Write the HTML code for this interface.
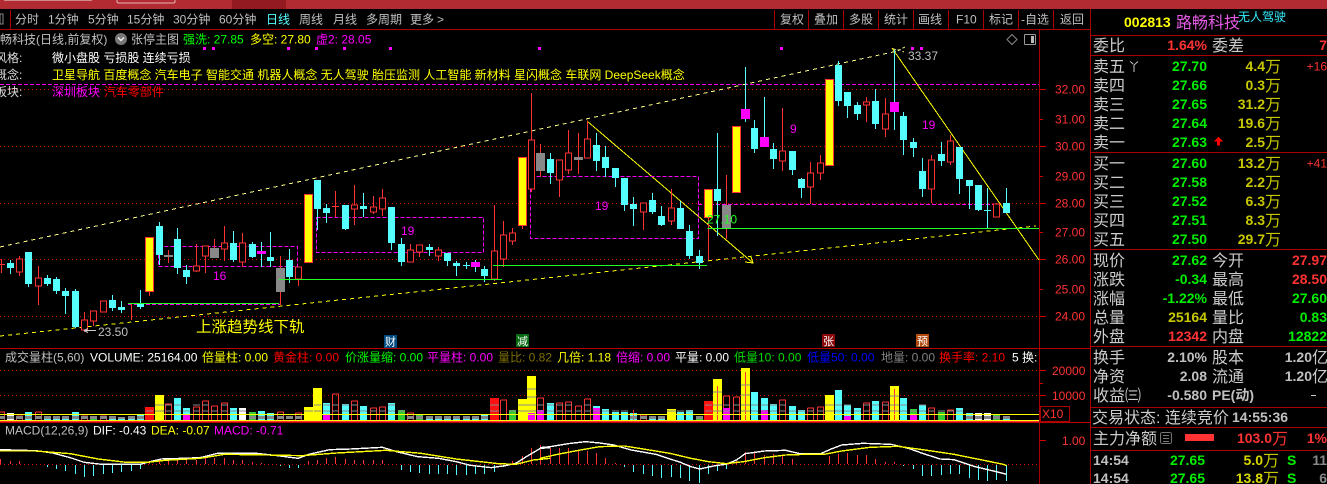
<!DOCTYPE html>
<html><head><meta charset="utf-8"><title>路畅科技</title>
<style>
html,body{margin:0;padding:0;background:#000;width:1327px;height:484px;overflow:hidden}
svg{display:block;font-family:"Liberation Sans","WenQuanYi Zen Hei","Noto Sans CJK SC",sans-serif}
.c{shape-rendering:crispEdges}
.b{font-weight:bold;font-size:14px}
</style></head><body>
<svg width="1327" height="484" viewBox="0 0 1327 484" xmlns="http://www.w3.org/2000/svg">
<rect width="1327" height="484" fill="#000"/>
<g class="c">
<rect width="1327" height="9" fill="#b22b33"/>
<rect x="232" width="54" height="9" fill="#931a20"/>
<path d="M117 0v1q0 2 2 2h54q2 0 2-2V0" fill="none" stroke="#e8b0b0"/>
<path d="M4 0h88v1H4z" fill="#e8c8c8" opacity=".6"/>
<path d="M10.500 10V29 M774.500 10V29M808.500 10V29M843.500 10V29M878.500 10V29M913.500 10V29M948.500 10V29M983.500 10V29M1018.500 10V29M1053.500 10V29M1090.500 9V484M1039.500 30V484" stroke="#a00" fill="none"/>
<path d="M0 29.500H1090M1091 35.500H1327M1091 55.500H1327M1091 152.500H1327M1091 249.500H1327M1091 346.500H1327M1091 407.500H1327M1091 427.500H1327M1091 450.500H1327" stroke="#a00"/>
<path d="M0 348.500H1091M0 422.500H1091" stroke="#b00"/>
<path d="M0 89.500H1039M0 146.500H1039M0 203.500H1039M0 259.500H1039M0 316.500H1039M0 370.500H1039M0 395.500H1039M0 464.500H1039" stroke="#c00" stroke-dasharray="1 3"/>
<path d="M1040 89.500h6M1040 119.500h3M1040 146.500h6M1040 176.500h3M1040 203.500h6M1040 232.500h3M1040 259.500h6M1040 289.500h3M1040 316.500h6M1040 370.500h6M1040 383.500h3M1040 395.500h6M1040 440.500h6" stroke="#c00"/>
</g>
<!-- toolbar -->
<g font-size="12" fill="#c0c0c0">
<text x="15" y="23.500">分时</text><text x="48" y="23.500">1分钟</text><text x="88" y="23.500">5分钟</text><text x="127" y="23.500">15分钟</text><text x="173" y="23.500">30分钟</text><text x="219" y="23.500">60分钟</text><text x="266" y="23.500" fill="#5ff">日线</text><text x="299" y="23.500">周线</text><text x="333" y="23.500">月线</text><text x="366" y="23.500">多周期</text><text x="410" y="23.500">更多</text><text x="437" y="23.500">&gt;</text>
<text x="780" y="23.500">复权</text><text x="814" y="23.500">叠加</text><text x="849" y="23.500">多股</text><text x="884" y="23.500">统计</text><text x="918" y="23.500">画线</text><text x="956" y="23.500">F10</text><text x="989" y="23.500">标记</text><text x="1021" y="23.500">-自选</text><text x="1060" y="23.500">返回</text>
<rect x="0" y="14" width="3" height="10" fill="none" stroke="#888"/>
</g>
<!-- title row -->
<g font-size="12">
<text x="0" y="43.500" fill="#c0c0c0">畅科技(日线,前复权)</text>
<circle cx="121" cy="39" r="6" fill="#777"/><path d="M118 37.500l3 3 3-3" fill="none" stroke="#eee" stroke-width="1.500"/>
<text x="131" y="43.500" fill="#c0c0c0">张停主图</text>
<text x="183" y="43.500" fill="#0f0">强洗: 27.85</text>
<text x="250" y="43.500" fill="#ff0">多空: 27.80</text>
<text x="316" y="43.500" fill="#f0f">虚2: 28.05</text>
<text x="-5" y="62" fill="#ddd">风格:</text><text x="52" y="62" fill="#fff">微小盘股 亏损股 连续亏损</text>
<text x="-5" y="79" fill="#ddd">概念:</text><text x="52" y="79" fill="#ff0">卫星导航 百度概念 汽车电子 智能交通 机器人概念 无人驾驶 胎压监测 人工智能 新材料 星闪概念 车联网 DeepSeek概念</text>
<text x="-5" y="96" fill="#ddd">板块:</text><text x="52" y="96" fill="#f0f">深圳板块</text><text x="104" y="96" fill="#f00">汽车零部件</text>
</g>
<g class="c" fill="#f0f"><path d="M203 47h3v3h-3zM212 47h3v3h-3zM287 47h3v3h-3zM315 47h3v3h-3zM343 47h3v3h-3zM389 47h3v3h-3zM538 47h3v3h-3zM780 47h3v3h-3zM911 47h3v3h-3zM920 47h3v3h-3z"/></g>
<path d="M1012 34.500l5 5-5 5-5-5z" fill="none" stroke="#888"/>
<g class="c"><rect x="1024.500" y="34.500" width="11" height="10" rx="1" fill="none" stroke="#999"/><rect x="1031" y="36" width="3" height="7" fill="#bbb"/></g>
<!-- lines -->
<g class="c" fill="none">
<path d="M0 84.500H1039" stroke="#f0f" stroke-dasharray="4 2"/>
<path d="M0 247L893 52" stroke="#ff8" stroke-dasharray="4 4"/>
<path d="M0 336L1036 226" stroke="#ff0" stroke-dasharray="4 4"/>
<path d="M587 121L753 263M892 48L1039 260" stroke="#ff0"/>
<path d="M745 262l8 1-2-6" stroke="#ff0"/>
<path d="M905 47l-6 3 -6-1M893 52l7-2 4 2" stroke="#ff8" stroke-dasharray="3 2"/>
<path d="M158.500 246.500H297.500V266.500H158.500ZM316.500 217.500H483.500V252.500H316.500ZM530.500 176.500H698.500V238.500H530.500ZM128 304.500H280M698 204.500H994" stroke="#f0f" stroke-dasharray="4 2"/>
</g>
<!-- candles -->
<g class="c" fill="none">
<path stroke="#5ff" d="M10.500 260V274M28.500 252V287M47.500 275V286M56.500 277V294M65.500 288V314M75.500 289V328M112.500 295V311M121.500 301V313M140.500 290V309M159.500 222V265M177.500 228V274M186.500 265V284M233.500 231V262M252.500 242V258M270.500 232V267M289.500 249V283M317.500 180V230M326.500 204V223M345.500 205V230M363.500 193V217M391.500 207V250M401.500 238V266M429.500 244V256M447.500 253V266M456.500 261V276M466.500 262V269M484.500 266V282M550.500 153V184M596.500 133V171M605.500 146V177M615.500 168V187M624.500 178V211M633.500 197V226M652.500 193V214M661.500 206V226M680.500 201V229M689.500 225V259M699.500 250V269M717.500 133V236M754.500 120V153M773.500 143V169M792.500 151V175M801.500 178V198M838.500 61V106M847.500 92V118M857.500 102V120M875.500 89V129M903.500 112V155M913.500 138V157M922.500 158V197M941.500 142V166M959.500 147V194M969.500 180V209M978.500 185V211M1006.500 188V213M987.500 188V229M261.500 242V267M475.500 260V272M745.500 67V122M764.500 97V147M894.500 50V130M984 210.500h7M463 265.500h7"/>
<path stroke="#5ff" stroke-width="7" d="M10.500 263V268M28.500 252V284M47.500 278V284M56.500 279V291M65.500 291V296M75.500 291V327M112.500 300V308M121.500 307V310M140.500 304V307M159.500 226V255M177.500 239V268M186.500 270V277M233.500 243V260M252.500 244V257M270.500 257V261M289.500 260V277M317.500 180V209M326.500 208V213M345.500 205V229M363.500 206V209M391.500 207V243M401.500 244V262M429.500 247V250M447.500 253V261M456.500 263V266M484.500 269V276M550.500 159V173M596.500 145V161M605.500 157V168M615.500 168V178M624.500 178V205M633.500 204V209M652.500 200V212M661.500 216V225M680.500 208V229M689.500 231V256M699.500 256V263M717.500 189V201M754.500 128V149M773.500 149V159M792.500 151V170M801.500 179V188M838.500 65V101M847.500 92V106M857.500 105V114M875.500 101V124M903.500 116V140M913.500 142V148M922.500 171V189M941.500 154V161M959.500 147V179M969.500 180V186M978.500 185V210M1006.500 203V213"/>
<path stroke="#f33" d="M19.500 256V276M38.500 266V305M84.500 312V332M93.500 311V326M103.500 301V312M196.500 244V272M205.500 246V273M224.500 226V261M242.500 233V267M298.500 267V286M354.500 185V225M373.500 196V214M382.500 189V216M410.500 244V262M419.500 245V257M438.500 247V261M494.500 205V281M503.500 221V267M512.500 228V245M531.500 93V192M559.500 160V197M568.500 130V174M587.500 121V158M643.500 203V230M671.500 189V225M782.500 108V171M810.500 162V204M820.500 155V180M885.500 98V137M931.500 155V203M950.500 135V165M996.500 203V217M866.500 97V122M1.500 259V273M335.500 191V217M131.500 303V320M168.500 250V263M214.500 239V258M280.500 256V305M540.500 144V177M578.500 133V174M726.500 175V239M708.500 218V260M149.500 292V296M522.500 226V229M128 303.500H138M0 264.500h5M332 206.500h7"/>
<path stroke="#f33" fill="#000" d="M16.500 259h6v13h-6zM35.500 278h6v8h-6zM81.500 320h6v10h-6zM90.500 311h6v10h-6zM100.500 301h6v11h-6zM193.500 266h6v5h-6zM202.500 246h6v10h-6zM221.500 243h6v6h-6zM239.500 243h6v19h-6zM295.500 267h6v12h-6zM351.500 205h6v4h-6zM370.500 207h6v5h-6zM379.500 198h6v11h-6zM407.500 250h6v12h-6zM416.500 245h6v7h-6zM435.500 250h6v6h-6zM491.500 251h6v28h-6zM500.500 235h6v24h-6zM509.500 233h6v8h-6zM528.500 140h6v49h-6zM556.500 160h6v20h-6zM565.500 153h6v17h-6zM584.500 139h6v19h-6zM640.500 203h6v9h-6zM668.500 208h6v13h-6zM779.500 151h6v10h-6zM807.500 173h6v14h-6zM817.500 163h6v10h-6zM882.500 114h6v15h-6zM928.500 160h6v29h-6zM947.500 141h6v21h-6zM993.500 204h6v13h-6zM863.500 102h6v3h-6z"/>
<path fill="#888" d="M210 248h9v10h-9zM276 268h9v24h-9zM536 153h9v18h-9zM722 205h9v23h-9zM574 157h9v3h-9zM164 255h9v2h-9z"/>
<path fill="#f0f" d="M471 262h9v5h-9zM741 109h9v10h-9zM760 137h9v10h-9zM890 102h9v10h-9zM257 251h9v3h-9z"/>
<path fill="#ff0" stroke="#f33" d="M145.500 237.500h8v54h-8zM304.500 194.500h8v68h-8zM518.500 157.500h8v68h-8zM704.500 189.500h8v28h-8zM732.500 126.500h8v66h-8zM825.500 79.500h8v86h-8z"/>
</g>
<!-- solid green -->
<g class="c" fill="none" stroke="#2f2">
<path d="M128 303.500H279M279 279.500H502M493 265.500H707M707.500 228.500H1039"/>
</g>
<!-- labels -->
<g font-size="12" fill="#c0c0c0">
<text x="98" y="336">23.50</text><text x="908" y="60">33.37</text>
<path d="M84 330.500h12M84 330.500l4-2M84 330.500l4 2" stroke="#ccc" fill="none"/>
<text x="707" y="223.500" fill="#2f2">27.10</text>
</g>
<g font-size="12" fill="#f0f"><text x="213" y="280">16</text><text x="401" y="235">19</text><text x="595" y="210">19</text><text x="790" y="133">9</text><text x="922" y="129">19</text></g>
<text x="196" y="332" font-size="15.500" fill="#ff0">上涨趋势线下轨</text>
<g class="c"><rect x="384" y="335" width="13" height="13" fill="#014a80"/><rect x="516" y="334" width="13" height="13" fill="#086a10"/><rect x="822" y="334" width="13" height="13" fill="#8a0a0a"/><rect x="916" y="334" width="13" height="13" fill="#b04a10"/></g>
<g font-size="11" fill="#fff"><text x="385" y="345.500">财</text><text x="517" y="345">减</text><text x="823" y="345">张</text><text x="917" y="345">预</text></g>
<!-- axis -->
<g font-size="12" fill="#f33">
<text x="1055" y="93.500">32.00</text><text x="1055" y="123.500">31.00</text><text x="1055" y="150.500">30.00</text><text x="1055" y="180.500">29.00</text><text x="1055" y="207.500">28.00</text><text x="1055" y="236.500">27.00</text><text x="1055" y="263.500">26.00</text><text x="1055" y="293.500">25.00</text><text x="1055" y="320.500">24.00</text>
<text x="1052" y="375">20000</text><text x="1052" y="400">10000</text><text x="1062" y="445">1.00</text>
<text x="1042" y="418">X10</text>
</g>
<rect class="c" x="1040.500" y="406.500" width="29" height="15" fill="none" stroke="#a00"/>
<!-- volume header -->
<g font-size="12">
<text x="5" y="361.500" fill="#c0c0c0">成交量柱(5,60)</text><text x="90" y="361.500" fill="#fff">VOLUME: 25164.00</text><text x="202" y="361.500" fill="#ff0">倍量柱: 0.00</text><text x="273" y="361.500" fill="#f00">黄金柱: 0.00</text><text x="345" y="361.500" fill="#0f0">价涨量缩: 0.00</text><text x="427" y="361.500" fill="#f0f">平量柱: 0.00</text><text x="498" y="361.500" fill="#807000">量比: 0.82</text><text x="557" y="361.500" fill="#ff0">几倍: 1.18</text><text x="616" y="361.500" fill="#f0f">倍缩: 0.00</text><text x="675" y="361.500" fill="#fff">平量: 0.00</text><text x="734" y="361.500" fill="#0d0">低量10: 0.00</text><text x="807" y="361.500" fill="#00f">低量50: 0.00</text><text x="881" y="361.500" fill="#808080">地量: 0.00</text><text x="939" y="361.500" fill="#f00">换手率: 2.10</text><text x="1012" y="361.500" fill="#fff">5 换:</text>
<text x="5" y="434.500" fill="#c0c0c0">MACD(12,26,9)</text><text x="93" y="434.500" fill="#fff">DIF: -0.43</text><text x="151" y="434.500" fill="#ff0">DEA: -0.07</text><text x="214" y="434.500" fill="#f0f">MACD: -0.71</text>
</g>
<!-- volume bars -->
<g class="c" fill="none">
<path stroke="#5ff" stroke-width="7" d="M28.500 412V421M47.500 416V421M56.500 416V421M65.500 416V421M75.500 412V421M112.500 416V421M121.500 417V421M131.500 416V421M140.500 415V421M177.500 398V421M186.500 408V421M233.500 408V421M261.500 411V421M270.500 413V421M326.500 403V421M345.500 404V421M363.500 406V421M391.500 403V421M429.500 416V421M438.500 416V421M447.500 416V421M456.500 416V421M466.500 416V421M475.500 416V421M484.500 415V421M550.500 403V421M596.500 406V421M605.500 409V421M615.500 412V421M624.500 412V421M633.500 413V421M652.500 416V421M661.500 416V421M680.500 412V421M689.500 410V421M754.500 392V421M764.500 398V421M773.500 404V421M792.500 406V421M801.500 410V421M838.500 390V421M847.500 405V421M857.500 408V421M875.500 401V421M903.500 398V421M922.500 405V421M959.500 408V421M969.500 413V421M1006.500 416V421"/>
<path stroke="#fff" stroke-width="7" d="M10.500 413V421M242.500 408V421M978.500 413V421M987.500 413V421"/>
<path stroke="#3c3" stroke-width="7" d="M93.500 416V421M252.500 412V421M401.500 410V421M419.500 415V421M512.500 410V421M699.500 416V421M913.500 409V421M941.500 412V421M996.500 415V421"/>
<path stroke="#f33" d="M-1.500 412H4.500V421M16.500 416h6V421M16.500 416V421M35.500 412h6V421M35.500 412V421M81.500 416h6V421M81.500 416V421M100.500 416h6V421M100.500 416V421M165.500 404h6V421M165.500 404V421M193.500 407h6V421M193.500 407V421M202.500 401h6V421M202.500 401V421M211.500 406h6V421M211.500 406V421M221.500 403h6V421M221.500 403V421M277.500 412h6V421M277.500 412V421M295.500 413h6V421M295.500 413V421M332.500 394h6V421M332.500 394V421M351.500 401h6V421M351.500 401V421M370.500 408h6V421M370.500 408V421M379.500 407h6V421M379.500 407V421M407.500 413h6V421M407.500 413V421M500.500 400h6V421M500.500 400V421M537.500 398h6V421M537.500 398V421M556.500 403h6V421M556.500 403V421M565.500 402h6V421M565.500 402V421M575.500 406h6V421M575.500 406V421M584.500 399h6V421M584.500 399V421M640.500 415h6V421M640.500 415V421M723.500 396h6V421M723.500 396V421M733.500 397h6V421M733.500 397V421M779.500 400h6V421M779.500 400V421M807.500 408h6V421M807.500 408V421M817.500 407h6V421M817.500 407V421M863.500 403h6V421M863.500 403V421M882.500 402h6V421M882.500 402V421M928.500 408h6V421M928.500 408V421M947.500 410h6V421M947.500 410V421"/>
<path stroke="#ff0" stroke-width="9" d="M159.500 395V421M308.500 407V421M317.500 388V421M522.500 399V421M531.500 376V421M671.500 409V421M717.500 379V421M745.500 368V421M829.500 395V421M894.500 386V421"/>
<path stroke="#f11" stroke-width="9" d="M149.500 407V421M494.500 398V421M708.500 401V421"/>
<path stroke="#f33" d="M745.500 372V421M717.500 386V420M894.500 389V420M633.500 410V420"/>
<path stroke="#f0f" stroke-width="7" d="M186.500 415V421M326.500 414V421M531.500 413V421M540.500 410V421M596.500 408V421M726.500 408V421M764.500 410V421M847.500 416V421M913.500 415V421"/>
<path stroke="#888" stroke-width="7" d="M1.500 416V419M10.500 416V419M19.500 416V419M28.500 416V419M38.500 416V419M47.500 416V419M56.500 416V419M65.500 416V419M75.500 416V419M84.500 416V419M93.500 416V419M103.500 416V419M112.500 416V419M121.500 417V419M131.500 416V419M140.500 416V419M252.500 416V419M261.500 416V419M270.500 416V419M280.500 416V419M289.500 416V419M298.500 416V419M410.500 416V419M419.500 416V419M429.500 416V419M438.500 416V419M447.500 416V419M456.500 416V419M466.500 416V419M475.500 416V419M484.500 416V419M633.500 416V419M643.500 416V419M652.500 416V419M661.500 416V419M699.500 416V419M969.500 416V419M978.500 416V419M987.500 416V419M996.500 416V419M1006.500 416V419"/>
<path stroke="#888" d="M155 405h9M165 405h7M174 405h7M193 405h7M202 405h7M221 405h7M332 405h7M351 405h7M314 405h7M323 405h7M342 405h7M388 405h7M518 405h9M527 405h9M537 405h7M547 405h7M556 405h7M565 405h7M584 405h7M713 405h9M705 405h7M723 405h7M733 405h7M741 405h9M751 405h7M761 405h7M770 405h7M779 405h7M825 405h9M835 405h7M844 405h7M863 405h7M872 405h7M882 405h7M890 405h9M900 405h7M919 405h7M490 405h9M741 385h9M741 395h9M527 389h9M527 397h9M713 392h9M890 396h9M155 411h9M165 411h7M174 411h7M193 411h7M202 411h7M221 411h7M332 411h7M351 411h7M314 411h7M323 411h7M342 411h7M388 411h7M518 411h9M527 411h9M537 411h7M547 411h7M556 411h7M565 411h7M584 411h7M713 411h9M705 411h7M723 411h7M733 411h7M741 411h9M751 411h7M761 411h7M770 411h7M779 411h7M825 411h9M835 411h7M844 411h7M863 411h7M872 411h7M882 411h7M890 411h9M900 411h7M919 411h7M490 411h9M146 411h7M183 411h7M211 411h7M230 411h7M239 411h7M304 411h9M360 411h7M370 411h7M379 411h7M398 411h7M509 411h7M575 411h7M593 411h7M602 411h7M612 411h7M621 411h7M667 411h9M677 411h7M686 411h7M789 411h7M798 411h7M807 411h7M817 411h7M854 411h7M910 411h7M928 411h7M938 411h7M947 411h7M956 411h7"/>
<path stroke="#ff0" d="M0 414.500H1039"/>
<path stroke="#f33" d="M0 421.500H1039"/>
<path stroke="#ff0" d="M0 420.500H1039"/>
</g>
<!-- MACD bars -->
<g class="c" fill="none">
<path stroke="#f33" d="M0.500 459V464M10.500 461V464M19.500 461V464M149.500 462V464M159.500 459V464M168.500 458V464M177.500 458V464M186.500 460V464M196.500 460V464M205.500 458V464M214.500 458V464M224.500 458V464M233.500 460V464M242.500 460V464M252.500 462V464M261.500 463V464M308.500 461V464M317.500 460V464M326.500 458V464M335.500 457V464M345.500 459V464M354.500 460V464M363.500 460V464M373.500 460V464M382.500 460V464M512.500 461V464M522.500 456V464M531.500 448V464M540.500 445V464M550.500 448V464M559.500 448V464M568.500 448V464M578.500 450V464M587.500 451V464M596.500 453V464M605.500 458V464M615.500 463V464M736.500 461V464M745.500 452V464M754.500 452V464M764.500 455V464M773.500 454V464M782.500 456V464M792.500 459V464M829.500 456V464M838.500 454V464M847.500 453V464M857.500 455V464M866.500 455V464M875.500 459V464M885.500 462V464M894.500 462V464"/>
<path stroke="#5ff" d="M47.500 465V467M56.500 465V469M65.500 465V471M75.500 465V474M84.500 465V477M93.500 465V476M103.500 465V474M112.500 465V473M121.500 465V472M131.500 465V471M140.500 465V469M280.500 465V466M289.500 465V468M298.500 465V468M401.500 465V470M410.500 465V472M419.500 465V473M429.500 465V474M438.500 465V474M447.500 465V474M456.500 465V475M466.500 465V475M475.500 465V474M484.500 465V474M494.500 465V472M503.500 465V467M624.500 465V467M633.500 465V472M643.500 465V474M652.500 465V476M661.500 465V478M671.500 465V477M680.500 465V478M689.500 465V481M699.500 465V483M708.500 465V474M717.500 465V471M726.500 465V469M903.500 465V466M913.500 465V469M922.500 465V476M931.500 465V476M941.500 465V475M950.500 465V474M959.500 465V474M969.500 465V478M978.500 465V480M987.500 465V481M996.500 465V480M1006.500 465V481"/>
</g>
<!-- MACD lines -->
<g transform="translate(0,345) scale(.3509,.3333)" fill="none" class="c">
<polyline vector-effect="non-scaling-stroke" stroke-width="1.400" stroke="#fff" points="0,314 70,316 110,318 150,324 200,338 240,352 290,358 340,358 400,358 420,352 460,342 520,340 570,338 620,325 730,325 790,332 850,340 880,328 940,314 1000,312 1090,307 1130,320 1190,335 1250,340 1300,350 1340,361 1400,368 1440,362 1470,355 1500,335 1540,310 1568,308"/>
<polyline vector-effect="non-scaling-stroke" stroke-width="1.400" stroke="#ff0" points="0,318 100,318 200,326 280,342 360,352 420,352 470,346 570,340 640,328 760,330 860,332 960,324 1100,316 1200,325 1300,342 1420,356 1470,358 1520,345 1568,340"/>
</g>
<g transform="translate(540,345) scale(.3509,.3333)" fill="none" class="c">
<polyline vector-effect="non-scaling-stroke" stroke-width="1.400" stroke="#fff" points="0,308 30,305 80,296 130,290 170,294 210,300 260,315 330,328 400,352 430,365 455,372 500,362 530,358 560,345 585,326 640,318 700,316 740,326 800,326 830,312 860,300 920,295 1000,298 1050,310 1090,325 1140,342 1180,344 1240,365 1300,380 1330,388"/>
<polyline vector-effect="non-scaling-stroke" stroke-width="1.400" stroke="#ff0" points="0,340 50,328 110,316 170,305 240,303 300,313 370,325 430,340 480,350 530,356 580,350 640,338 700,330 760,328 810,328 860,318 940,307 1020,304 1090,314 1180,328 1260,345 1320,358 1330,362"/>
</g>
<!-- right panel -->
<text x="1124" y="27" class="b" fill="#ff0">002813</text>
<text x="1176" y="28" font-size="16" fill="#e65be6">路畅科技</text>
<text x="1238" y="21" font-size="12" fill="#3ef">无人驾驶</text>
<g font-size="16" fill="#ccc">
<text x="1093" y="51">委比</text><text x="1212" y="51">委差</text>
<text x="1093" y="72">卖五</text><text x="1093" y="91">卖四</text><text x="1093" y="110">卖三</text><text x="1093" y="129">卖二</text><text x="1093" y="148">卖一</text>
<text x="1093" y="169">买一</text><text x="1093" y="188">买二</text><text x="1093" y="207">买三</text><text x="1093" y="226">买四</text><text x="1093" y="245">买五</text>
<text x="1093" y="266">现价</text><text x="1093" y="285">涨跌</text><text x="1093" y="304">涨幅</text><text x="1093" y="323">总量</text><text x="1093" y="342">外盘</text>
<text x="1212" y="266">今开</text><text x="1212" y="285">最高</text><text x="1212" y="304">最低</text><text x="1212" y="323">量比</text><text x="1212" y="342">内盘</text>
<text x="1093" y="363">换手</text><text x="1093" y="382">净资</text><text x="1093" y="401">收益㈢</text>
<text x="1212" y="363">股本</text><text x="1212" y="382">流通</text>
<text x="1092" y="423">交易状态: 连续竞价</text>
<text x="1093" y="444">主力净额</text>
<text x="1128" y="71" font-size="12">丫</text>
<text x="1312" y="363">亿</text><text x="1312" y="382">亿</text>
</g>
<g class="b" fill="#0e0" text-anchor="end">
<text x="1207" y="71">27.70</text><text x="1207" y="90">27.66</text><text x="1207" y="109">27.65</text><text x="1207" y="128">27.64</text><text x="1207" y="147">27.63</text>
<text x="1207" y="168">27.60</text><text x="1207" y="187">27.58</text><text x="1207" y="206">27.52</text><text x="1207" y="225">27.51</text><text x="1207" y="244">27.50</text>
<text x="1207" y="265">27.62</text><text x="1207" y="284">-0.34</text><text x="1207" y="303">-1.22%</text>
<text x="1327" y="303">27.60</text><text x="1327" y="322">0.83</text><text x="1327" y="341">12822</text>
<text x="1205" y="465">27.65</text><text x="1205" y="483">27.65</text>
</g>
<g class="b" fill="#c8c800" text-anchor="end">
<text x="1265" y="71">4.4</text><text x="1265" y="90">0.3</text><text x="1265" y="109">31.2</text><text x="1265" y="128">19.6</text><text x="1265" y="147">2.5</text>
<text x="1265" y="168">13.2</text><text x="1265" y="187">2.2</text><text x="1265" y="206">6.3</text><text x="1265" y="225">8.3</text><text x="1265" y="244">29.7</text>
<text x="1207" y="322">25164</text><text x="1263" y="465" fill="#d8d800">5.0</text><text x="1263" y="483" fill="#d8d800">13.8</text>
</g>
<g font-size="16" fill="#c8c800">
<text x="1265" y="72">万</text><text x="1265" y="91">万</text><text x="1265" y="110">万</text><text x="1265" y="129">万</text><text x="1265" y="148">万</text>
<text x="1265" y="169">万</text><text x="1265" y="188">万</text><text x="1265" y="207">万</text><text x="1265" y="226">万</text><text x="1265" y="245">万</text>
<text x="1263" y="466">万</text><text x="1263" y="484">万</text>
</g>
<g class="b" fill="#f33" text-anchor="end">
<text x="1207" y="50">1.64%</text><text x="1327" y="50">7</text>
<text x="1327" y="265">27.97</text><text x="1327" y="284">28.50</text><text x="1207" y="341">12342</text>
<text x="1272" y="443">103.0</text><text x="1327" y="443">1%</text>
</g>
<text x="1272" y="444" font-size="16" fill="#f33">万</text>
<g font-size="12" fill="#f33" text-anchor="end"><text x="1327" y="70.500">+16</text><text x="1327" y="167.500">+41</text></g>
<path d="M1214 141.500l4.500-5 4.500 5h-3v4h-3v-4z" fill="#f00" class="c"/>
<g class="b" fill="#c0c0c0" text-anchor="end">
<text x="1207" y="362">2.10%</text><text x="1207" y="381">2.08</text><text x="1207" y="400">-0.580</text>
<text x="1312" y="362">1.20</text><text x="1312" y="381">1.20</text>
</g>
<text x="1212" y="400" class="b" fill="#c0c0c0">PE(动)</text>
<path class="c" d="M1311 395.500h5" stroke="#ccc"/>
<text x="1232" y="422" class="b" fill="#c0c0c0">14:55:36</text>
<g class="c"><rect x="1160.500" y="432.500" width="11" height="11" rx="2" fill="none" stroke="#777"/><path d="M1163 435.500h6M1163 438.500h6M1163 441.500h6" stroke="#777"/><rect x="1185" y="434" width="29" height="7" fill="#f33"/></g>
<g class="b" fill="#c0c0c0"><text x="1093" y="465">14:54</text><text x="1093" y="483">14:54</text></g>
<g class="b" fill="#0e0"><text x="1287" y="465">S</text><text x="1287" y="483">S</text></g>
<g class="b" fill="#888" text-anchor="end"><text x="1327" y="465">11</text><text x="1327" y="483">6</text></g>
</svg>
</body></html>
